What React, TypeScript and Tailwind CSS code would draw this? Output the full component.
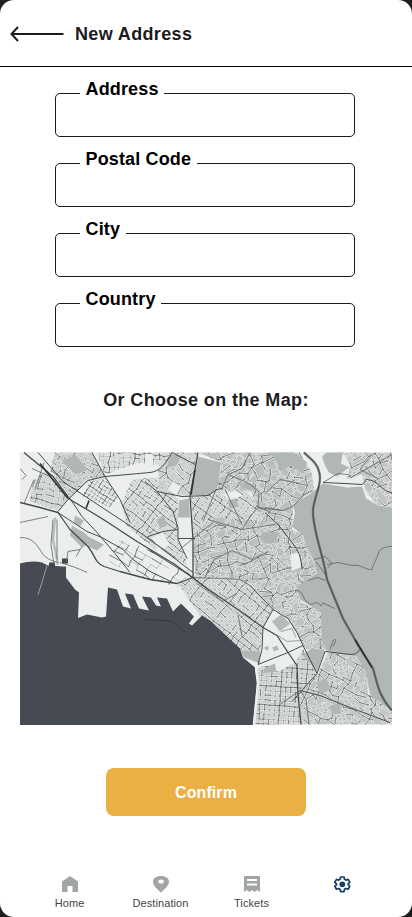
import React from "react";

type Point = [number, number];

type District = {
  id: string;
  outline: string;
  angle: number;
  stepX: number;
  stepY: number;
  jitter: number;
  keep: number;
  seed: number;
  ground: string;
};

function makeRandom(seed: number) {
  let s = seed;
  return () => {
    s = (s * 1664525 + 1013904223) % 4294967296;
    return s / 4294967296;
  };
}

// Builds a street mesh: a rotated lattice whose corners are shifted at random.
// Some segments come out darker, as the busier streets of the district.
function streets(d: District): { light: string; dark: string } {
  const pts = d.outline.split(" ").map((p) => p.split(",").map(Number) as Point);
  const xs = pts.map((p) => p[0]);
  const ys = pts.map((p) => p[1]);
  const cx = (Math.min(...xs) + Math.max(...xs)) / 2;
  const cy = (Math.min(...ys) + Math.max(...ys)) / 2;
  const r = Math.hypot(Math.max(...xs) - cx, Math.max(...ys) - cy) + 6;
  const rnd = makeRandom(d.seed);
  const a = (d.angle * Math.PI) / 180;
  const nx = Math.ceil(r / d.stepX);
  const ny = Math.ceil(r / d.stepY);
  const grid: Point[][] = [];
  for (let j = -ny; j <= ny; j++) {
    const row: Point[] = [];
    for (let i = -nx; i <= nx; i++) {
      const u = i * d.stepX + (rnd() - 0.5) * d.jitter * d.stepX;
      const v = j * d.stepY + (rnd() - 0.5) * d.jitter * d.stepY;
      row.push([cx + u * Math.cos(a) - v * Math.sin(a), cy + u * Math.sin(a) + v * Math.cos(a)]);
    }
    grid.push(row);
  }
  let light = "";
  let dark = "";
  const seg = (p: Point, q: Point, busy: boolean) => {
    const s = `M${p[0].toFixed(1)} ${p[1].toFixed(1)}L${q[0].toFixed(1)} ${q[1].toFixed(1)}`;
    light += s;
    if (busy) dark += s;
  };
  for (let j = 0; j < grid.length; j++) {
    for (let i = 0; i < grid[j].length; i++) {
      if (i + 1 < grid[j].length && rnd() < d.keep) seg(grid[j][i], grid[j][i + 1], j % 4 === 0 || rnd() < 0.18);
      if (j + 1 < grid.length && rnd() < d.keep) seg(grid[j][i], grid[j + 1][i], i % 5 === 0 || rnd() < 0.18);
    }
  }
  return { light, dark };
}

const districts: District[] = [
  { id: "d1", outline: "55,453 92,453 105,477 88,481 70,498 50,470", angle: 28, stepX: 6, stepY: 4.4, jitter: 0.5, keep: 0.85, seed: 5, ground: "#c3c7c6" },
  { id: "d2", outline: "33,482 47,470 68,500 58,511 30,502", angle: 12, stepX: 5.5, stepY: 6, jitter: 0.4, keep: 0.8, seed: 6, ground: "#d0d3d2" },
  { id: "d3", outline: "96,453 172,453 162,466 138,463 105,475", angle: 4, stepX: 5, stepY: 5, jitter: 0.5, keep: 0.85, seed: 7, ground: "#d8dbda" },
  { id: "d4", outline: "90,482 106,478 118,498 110,508 82,496", angle: 32, stepX: 4, stepY: 4, jitter: 0.2, keep: 0.95, seed: 8, ground: "#dfe1e0" },
  { id: "d5", outline: "132,480 157,478 178,500 178,535 190,575 160,555 126,525 122,503", angle: 38, stepX: 5.5, stepY: 4.4, jitter: 0.3, keep: 0.92, seed: 9, ground: "#d3d6d5" },
  { id: "d6", outline: "158,470 172,453 198,453 191,497 160,492", angle: -55, stepX: 7, stepY: 6, jitter: 0.6, keep: 0.8, seed: 10, ground: "#c9cdcc" },
  { id: "d7", outline: "191,498 217,490 228,475 260,505 275,525 210,522 193,540", angle: 35, stepX: 6.4, stepY: 4, jitter: 0.25, keep: 0.92, seed: 11, ground: "#cbd0cf" },
  { id: "d8", outline: "198,453 262,453 300,453 312,474 314,490 295,484 265,495 235,490 217,488 222,463", angle: -25, stepX: 7, stepY: 5.6, jitter: 0.9, keep: 0.85, seed: 12, ground: "#babfbe" },
  { id: "d9", outline: "250,490 265,470 300,468 314,490 293,505 292,530 305,540 268,530", angle: 22, stepX: 7.2, stepY: 6, jitter: 0.75, keep: 0.88, seed: 13, ground: "#bac0bf" },
  { id: "d10", outline: "193,535 215,518 275,522 305,536 317,575 300,592 273,610 250,586 195,578", angle: -14, stepX: 6.4, stepY: 5, jitter: 1.1, keep: 0.88, seed: 14, ground: "#bac0bf" },
  { id: "d11", outline: "120,540 150,550 195,578 190,590 155,582 105,562", angle: 30, stepX: 9, stepY: 6, jitter: 0.3, keep: 0.6, seed: 15, ground: "#eceeed" },
  { id: "d12", outline: "178,584 195,575 250,582 273,610 262,630 262,660 240,650 200,616", angle: 39, stepX: 6.4, stepY: 5, jitter: 0.25, keep: 0.94, seed: 16, ground: "#cacfce" },
  { id: "d13", outline: "258,668 296,662 303,650 317,674 302,692 300,725 255,725", angle: 4, stepX: 5, stepY: 4.8, jitter: 0.12, keep: 0.94, seed: 17, ground: "#cbcfce" },
  { id: "d14", outline: "298,692 318,674 328,653 357,657 367,675 368,695 380,700 392,710 392,725 300,725", angle: 27, stepX: 6.8, stepY: 5.3, jitter: 0.6, keep: 0.88, seed: 18, ground: "#c0c6c5" },
  { id: "d15", outline: "271,606 296,590 300,602 322,613 326,650 306,650 288,619", angle: -20, stepX: 6, stepY: 5.3, jitter: 1.0, keep: 0.88, seed: 19, ground: "#bec4c3" },
  { id: "d16", outline: "343,453 392,453 392,508 376,505 365,490 362,475 347,480 350,465", angle: -32, stepX: 6.6, stepY: 6.2, jitter: 0.5, keep: 0.85, seed: 20, ground: "#c0c5c4" },
];

const meshes = districts.map((d) => ({ ...d, ...streets(d) }));

const parks = [
  "198,457 221,463 217,490 208,495 191,496",
  "179,501 189,499 190,518 178,518",
  "322,457 327,453 343,453 341,464 349,468 337,477 329,473 325,466",
  "268,453 293,453 307,463 303,474 291,466 280,472 276,460",
  "312,493 293,505 295,513 292,527 303,536 308,548 313,560 317,574 301,584 297,591 300,600 307,604 321,613 322,640 327,652 357,657 366,673 370,695 381,703 392,711 392,508 378,506 366,499 362,487 347,488 323,484",
  "302,655 312,649 325,651 317,672",
  "260,652 241,651 244,658 260,664",
  "75,455 88,470 76,475 62,462",
  "72,526 84,533 94,542 82,548 70,536",
  "75,516 84,521 80,527 74,523",
  "90,538 104,545 97,551 88,547",
  "228,501 236,499 239,507 229,509",
  "260,536 267,532 277,533 277,543 264,544",
  "236,483 252,484 259,491 246,490",
  "170,455 182,456 176,466 167,468",
  "265,668 275,664 276,672 263,674",
  "330,706 340,704 341,714 332,715",
  "316,683 326,679 331,690 320,694",
  "157,520 164,516 167,526 160,529",
];

const whiteBlocks = [
  "263,632 273,611 288,621 303,648 294,664 278,672 271,661 259,661",
  "152,538 163,533 170,546 158,551",
  "173,482 181,487 177,495 168,491",
  "145,454 153,455 153,467 145,468",
  "222,495 236,491 243,496 230,501",
  "290,555 299,553 301,568 292,571",
  "157,548 188,566 185,573 153,555",
];

const thickRoads = [
  "M304 453C310 459 317 463 319 472C323 484 313 499 313 512C313 532 323 554 327 580L343 619L360 649L373 669C377 682 378 696 392 711",
  "M24 453L53 477L70 500L87 510L105 521L137 542L175 565L207 589L235 608L263 628L277 636L288 653L297 666L298 695L301 725",
  "M198 453L195 470L190 497L193 540L193 578",
  "M20 503L40 508L58 513L70 530L88 547C97 559 94 562 104 567L120 572L150 580L177 584L193 578",
];

const mainRoads = [
  "M38 453L63 482L90 500L125 523L150 540L193 573",
  "M58 512L68 500L88 481L105 477L150 473C160 472 166 464 172 453L195 465",
  "M58 513L87 532L102 538L123 550L133 560L150 572L173 583",
  "M70 499L82 517L97 533L115 554L130 573",
  "M145 482L157 492L182 497L208 496L217 490L222 489",
  "M157 492L173 512L178 528L178 540L187 559",
  "M148 537L163 532L178 530",
  "M178 539L195 539",
  "M323 483L345 484L362 485C369 481 361 478 372 481C380 484 382 492 392 493",
  "M265 513L278 525L292 543C299 552 301 557 302 570",
  "M250 586L273 610L288 619L297 633L303 646L317 674L292 702",
  "M273 610L263 628L262 650L258 665L288 653L303 646",
  "M300 691L320 696L350 708L390 723",
  "M317 674L325 652L350 655C360 655 357 650 362 649",
  "M92 453L105 477L120 500L130 523",
  "M207 589L193 578L150 551",
];

const smallRoads = [
  "M20 538C34 538 37 546 43 555C49 561 52 561 58 563",
  "M222 489L228 475L242 469L250 453",
  "M228 475C240 480 252 484 259 493L258 508L282 511",
  "M208 520L225 525L242 530L275 525",
  "M242 530L251 516L258 508L270 512",
  "M327 565L338 563L352 566C360 564 366 571 372 570C374 562 377 560 379 552C383 547 388 547 392 547",
  "M295 591C305 591 302 601 308 603C312 608 315 601 319 604C323 611 321 600 324 604L335 609",
  "M308 581L318 578L325 581",
  "M193 578L223 579",
  "M223 579L240 580L250 586",
  "M20 523L48 517",
  "M20 469L26 476L22 480",
  "M60 563C70 566 79 569 87 573",
  "M68 552L66 565M68 552L80 550M82 547L76 557",
  "M53 520L51 545L54 565M57 520L57 560",
  "M32 469L50 477M44 463L35 490M24 504L34 480",
  "M203 522L216 490M225 490L242 525",
  "M330 650L333 641L336 640M333 647L336 641",
  "M197 584L222 602L237 594M238 615L242 637L259 651",
  "M300 691L306 700L309 725M300 691L277 707",
  "M314 560L325 557L332 564L327 569M316 562L326 576",
  "M323 483L338 474L348 475",
  "M351 478L392 455M372 455L360 470L378 479",
  "M145 537L175 558M182 548L214 522M205 578L214 560L232 551L252 560L268 552",
  "M265 508L283 511L293 507L304 495L313 491M265 494L280 480L300 484",
];

function AddressMap() {
  return (
    <svg className="block h-[273px] w-[372px]" viewBox="20 452.5 372 273" role="img" aria-label="Map">
      <defs>
        {meshes.map((m) => (
          <clipPath id={m.id} key={m.id}>
            <polygon points={m.outline} />
          </clipPath>
        ))}
      </defs>
      <rect x="20" y="452" width="372" height="274" fill="#eceeed" />
      {meshes.map((m) => (
        <g clipPath={`url(#${m.id})`} key={m.id} fill="none" strokeLinecap="round">
          <polygon points={m.outline} fill={m.ground} />
          <path d={m.light} stroke="#f0f2f1" strokeWidth="2.1" />
          <path d={m.light} stroke="#888d8d" strokeWidth="0.55" />
          <path d={m.dark} stroke="#5b6060" strokeWidth="0.6" />
        </g>
      ))}
      {whiteBlocks.map((p) => (
        <polygon points={p} fill="#eceeed" key={p} />
      ))}
      {parks.map((p) => (
        <polygon points={p} fill="#b0b7b6" key={p} />
      ))}
      <path d="M272 622L281 615L290 624L280 632ZM272 648l5-2 2 4-5 2zM264 648l4-2 1 4-3 1z" fill="#b5bbba" />
      <path d="M281 632L292 629L296 638M278 636L287 642L300 641" stroke="#9da3a2" strokeWidth="1" fill="none" />
      <path d="M55 518L53 540L58 565" stroke="#b9bfbe" strokeWidth="2.5" fill="none" />
      <path
        d="M20 564C27 562 35 561 42 563L48 566L63 567L66 567L66 578L75 590L79 593L78 618.5L87 615L102 618L106 617L108 588L117 590L123 607L131 609L125 594L133 595L139 609L149 611L142 597L151 598L156 606L161 607L157 598L167 599L173 612L181 604L194 617L189 624L192 626L202 616L210 621L240 649L243 658L255 668L257 683L253 726L20 726Z"
        fill="#464a52"
      />
      <path d="M49 563h6v5h-6zM62 559h6v5h-6z" fill="#41454b" />
      <path d="M47 566L42 583L38 595" stroke="#9a9ea2" strokeWidth="1" fill="none" />
      <path d="M144 620L172 621.5L186 633" stroke="#343840" strokeWidth="1" fill="none" />
      <path d="M256 668L258 684L254 725" stroke="#eceeed" strokeWidth="2.5" fill="none" />
      {smallRoads.map((d) => (
        <path d={d} key={d} stroke="#5e6363" strokeWidth="0.8" fill="none" />
      ))}
      {mainRoads.map((d) => (
        <path d={d} key={d} stroke="#484c4d" strokeWidth="1" fill="none" strokeLinejoin="round" />
      ))}
      {thickRoads.map((d) => (
        <path d={d} key={d} stroke="#45494a" strokeWidth="1.3" fill="none" strokeLinejoin="round" />
      ))}
      <path d={thickRoads[0]} stroke="#5a5f60" strokeWidth="2.4" fill="none" opacity="0.7" />
      <path d="M40 464L68 499M89 501L86 509M195 470L191 495M355 640L372 668" stroke="#303435" strokeWidth="1.6" fill="none" />
    </svg>
  );
}

function Field({ label }: { label: string }) {
  return (
    <div className="relative h-11 w-[300px] rounded-[5px] border border-[#1b1b1f]">
      <label className="absolute -top-[15px] left-6 bg-white pl-[5.5px] pr-[5.5px] text-[18px] leading-[21px] font-bold tracking-[0.15px] whitespace-nowrap text-black">
        {label}
      </label>
      <input aria-label={label} className="h-full w-full bg-transparent px-6 outline-none" />
    </div>
  );
}

function NavItem({ label, children }: { label?: string; children: React.ReactNode }) {
  return (
    <div className="flex w-[91px] flex-col items-center">
      <svg className="block size-6" viewBox="0 0 24 24" fill="#a1a5a4">
        {children}
      </svg>
      {label && <span className="mt-px text-[11px] leading-[13px] tracking-[0.1px] text-[#3c4644]">{label}</span>}
    </div>
  );
}

export default function App() {
  return (
    <div className="h-[917px] w-[412px] bg-[#1e1e1e] font-['Liberation_Sans',sans-serif]">
      <div className="flex h-full flex-col items-center overflow-hidden rounded-[14px] bg-white">
        <header className="flex h-[67px] w-full shrink-0 items-center border-b border-black pt-px pl-[10px]">
          <svg className="block h-4 w-[54px]" viewBox="0 0 54 16" fill="none" stroke="#1d1b20" strokeWidth="2">
            <path d="M53.5 8H1.5M8 1L1.5 8L8 15" />
          </svg>
          <h1 className="ml-[11px] pt-px text-[18px] leading-6 font-bold tracking-[0.36px] text-[#1d1b20]">New Address</h1>
        </header>
        <form className="mt-[26px] mr-[2px] flex flex-col gap-[26px]">
          <Field label="Address" />
          <Field label="Postal Code" />
          <Field label="City" />
          <Field label="Country" />
        </form>
        <h2 className="mt-[41px] text-[18px] leading-6 font-bold tracking-[0.36px] text-[#1d1b20]">Or Choose on the Map:</h2>
        <div className="mt-[40px]">
          <AddressMap />
        </div>
        <button className="mt-[43px] h-12 w-[200px] shrink-0 rounded-lg bg-[#eab043] pt-px text-[16px] font-bold tracking-[0.1px] text-white">
          Confirm
        </button>
        <nav className="mt-[56px] flex w-[364px]">
          <NavItem label="Home">
            <path d="M4 20V9.5L12 4L20 9.5V20H14.5V14H9.5V20Z" />
          </NavItem>
          <NavItem label="Destination">
            <path fillRule="evenodd" d="M12 20.5C8 17 4 13.4 4 9.8C4 6.5 7.2 4 12 4S20 6.5 20 9.8C20 13.4 16 17 12 20.5ZM12 7.4A2.8 2.1 0 1 0 12 11.6A2.8 2.1 0 1 0 12 7.4Z" />
          </NavItem>
          <NavItem label="Tickets">
            <path fillRule="evenodd" d="M4 4H20V20L17.3 18L14.7 20L12 18L9.3 20L6.7 18L4 20ZM7 7V9H17V7ZM7 11.5V13.5H17V11.5Z" />
          </NavItem>
          <NavItem>
            <g fill="none" stroke="#173e66" strokeWidth="1.7" strokeLinejoin="round" transform="translate(-0.7 0.3)">
              <path d="M10.3 4.7H13.7L14.2 7L15.6 7.8L17.8 7.1L19.5 10L17.8 11.6V12.4L19.5 14L17.8 16.9L15.6 16.2L14.2 17L13.7 19.3H10.3L9.8 17L8.4 16.2L6.2 16.9L4.5 14L6.2 12.4V11.6L4.5 10L6.2 7.1L8.4 7.8L9.8 7Z" />
            </g>
            <circle cx="11.3" cy="12.3" r="2.9" fill="#173e66" />
          </NavItem>
        </nav>
      </div>
    </div>
  );
}
